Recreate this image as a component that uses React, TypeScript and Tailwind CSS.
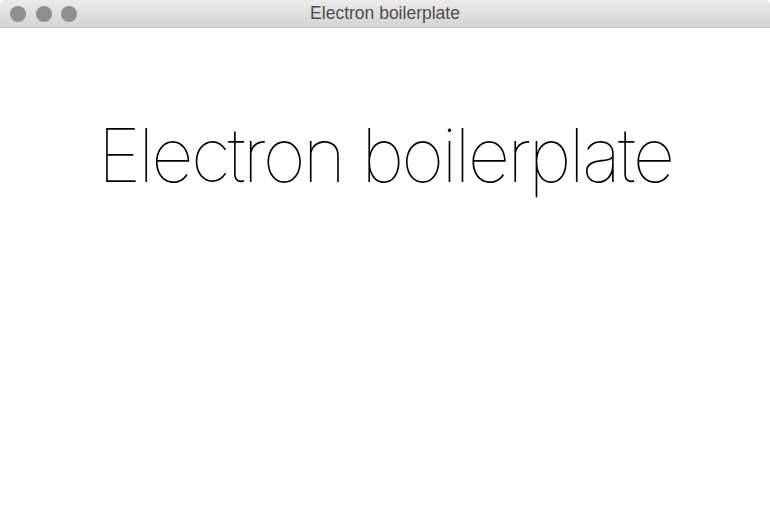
import React from 'react';

const App = () => {
  return (
    <div className="w-[770px] h-[513px] bg-white flex flex-col overflow-hidden font-['Inter',sans-serif]">
      {/* Title bar */}
      <div className="relative h-[28px] shrink-0 flex items-center justify-center bg-gradient-to-b from-[#ebebeb] to-[#d4d4d4] border-b border-[#c2c2c2] rounded-t-[5px]">
        <div className="absolute left-[10px] top-[6px] flex gap-[9.5px]">
          <span className="w-[16px] h-[16px] rounded-full bg-[#8e8e8e]" />
          <span className="w-[16px] h-[16px] rounded-full bg-[#8e8e8e]" />
          <span className="w-[16px] h-[16px] rounded-full bg-[#8e8e8e]" />
        </div>
        <span className="text-[17.5px] text-[#4d4d4d] font-['Liberation_Sans',sans-serif] leading-none pt-px">Electron boilerplate</span>
      </div>

      {/* Content */}
      <div className="flex-1 flex flex-col items-center pt-[83px]">
        <h1 className="text-[74px] font-thin text-black leading-[1.2] tracking-[-2.8px]">Electron boilerplate</h1>
      </div>
    </div>
  );
};

export default App;
